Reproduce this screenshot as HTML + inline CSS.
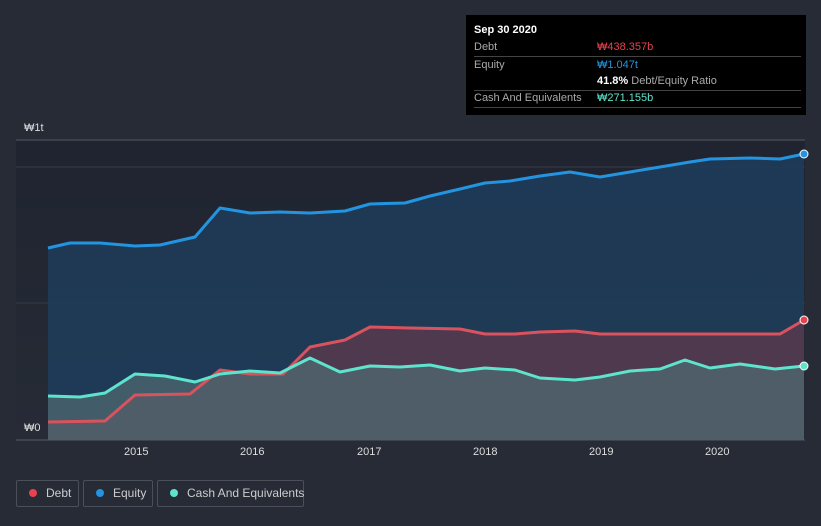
<!DOCTYPE html><html><head><style>
body{margin:0;width:821px;height:526px;background:#262b36;font-family:"Liberation Sans",sans-serif;overflow:hidden;position:relative}
.tt{position:absolute;left:466px;top:15px;width:340px;height:100px;background:#000;color:#fff;font-size:11px}
.row{position:absolute;left:8px;width:327px;border-bottom:1px solid #444;height:17px;line-height:17px;color:#aaa}
.row span{position:absolute;left:123px}
.lg{position:absolute;top:480px;height:27px;border:1px solid #4a4f5a;border-radius:2px;color:#ccc;font-size:12px;line-height:25px;box-sizing:border-box;white-space:nowrap}
.lg i{display:inline-block;width:8px;height:8px;border-radius:50%;margin:0 9px 0 12px}
.ax{position:absolute;color:#ddd;font-size:11px}
</style></head><body>
<svg width="821" height="526" style="position:absolute;left:0;top:0">
<defs><linearGradient id="g" x1="0" y1="0" x2="0" y2="1"><stop offset="0" stop-color="#1f2430"/><stop offset="1" stop-color="#262b36"/></linearGradient></defs>
<rect x="16" y="140" width="789" height="300" fill="url(#g)"/>
<line x1="16" y1="140" x2="805" y2="140" stroke="#555a65"/>
<line x1="16" y1="167" x2="805" y2="167" stroke="#363b47"/>
<line x1="16" y1="303" x2="805" y2="303" stroke="#363b47"/>
<line x1="16" y1="440" x2="805" y2="440" stroke="#555a65"/>
<polygon fill="#1f3d5c" opacity="0.85" points="48,440 48,248 70,243 100,243 135,246 160,245 195,237 220,208 250,213 280,212 310,213 345,211 370,204 405,203 430,196 460,189 485,183 510,181 540,176 570,172 600,177 630,172 660,167 690,162 710,159 750,158 780,159 804,154 804,440"/>
<polygon fill="#5a3a4c" opacity="0.8" points="48,440 48,422 105,421 135,395 190,394 220,370 250,374 283,374 310,347 345,340 370,327 410,328 460,329 485,334 515,334 540,332 575,331 600,334 660,334 700,334 780,334 804,320 804,440"/>
<polygon fill="#4f6a70" opacity="0.75" points="48,440 48,396 80,397 105,393 135,374 165,376 195,382 220,374 250,371 280,373 310,358 340,372 370,366 400,367 430,365 460,371 485,368 515,370 540,378 575,380 600,377 630,371 660,369 685,360 710,368 740,364 775,369 804,366 804,440"/>
<polyline fill="none" stroke="#2394e0" stroke-width="3" stroke-linejoin="round" points="48,248 70,243 100,243 135,246 160,245 195,237 220,208 250,213 280,212 310,213 345,211 370,204 405,203 430,196 460,189 485,183 510,181 540,176 570,172 600,177 630,172 660,167 690,162 710,159 750,158 780,159 804,154"/>
<polyline fill="none" stroke="#d9535e" stroke-width="3" stroke-linejoin="round" points="48,422 105,421 135,395 190,394 220,370 250,374 283,374 310,347 345,340 370,327 410,328 460,329 485,334 515,334 540,332 575,331 600,334 660,334 700,334 780,334 804,320"/>
<polyline fill="none" stroke="#5ee3cc" stroke-width="3" stroke-linejoin="round" points="48,396 80,397 105,393 135,374 165,376 195,382 220,374 250,371 280,373 310,358 340,372 370,366 400,367 430,365 460,371 485,368 515,370 540,378 575,380 600,377 630,371 660,369 685,360 710,368 740,364 775,369 804,366"/>
<circle cx="804" cy="154" r="4" fill="#2394e0" stroke="#fff"/>
<circle cx="804" cy="320" r="4" fill="#e04550" stroke="#fff"/>
<circle cx="804" cy="366" r="4" fill="#5ee3cc" stroke="#fff"/>
</svg>
<div class="ax" style="left:24px;top:122px">₩1t</div>
<div class="ax" style="left:24px;top:422px">₩0</div>
<div class="ax" style="left:124px;top:446px">2015</div>
<div class="ax" style="left:240px;top:446px">2016</div>
<div class="ax" style="left:357px;top:446px">2017</div>
<div class="ax" style="left:473px;top:446px">2018</div>
<div class="ax" style="left:589px;top:446px">2019</div>
<div class="ax" style="left:705px;top:446px">2020</div>
<div class="tt">
<div style="position:absolute;left:8px;top:9px;font-weight:bold">Sep 30 2020</div>
<div class="row" style="top:24px">Debt<span style="color:#e8434d">₩438.357b</span></div>
<div class="row" style="top:42px;border:none">Equity<span style="color:#2394e0">₩1.047t</span></div>
<div class="row" style="top:58px"><span style="color:#fff"><b>41.8%</b> <span style="position:static;color:#aaa">Debt/Equity Ratio</span></span></div>
<div class="row" style="top:75px">Cash And Equivalents<span style="color:#5ee3cc">₩271.155b</span></div>
</div>
<div class="lg" style="left:16px;width:63px"><i style="background:#e8434d"></i>Debt</div>
<div class="lg" style="left:83px;width:70px"><i style="background:#2394e0"></i>Equity</div>
<div class="lg" style="left:157px;width:147px"><i style="background:#5ee3cc"></i>Cash And Equivalents</div>
</body></html>
